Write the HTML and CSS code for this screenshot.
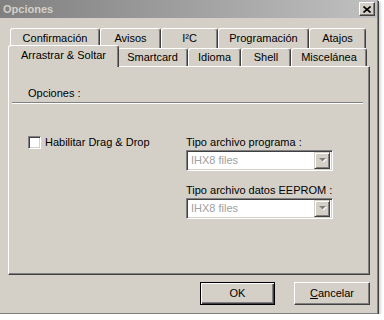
FILE: index.html
```html
<!DOCTYPE html>
<html>
<head>
<meta charset="utf-8">
<link rel="stylesheet" href="styles.css">
</head>
<body>
<div class="window">
  <div class="titlebar">
    <span class="title">Opciones</span>
    <div class="close">
      <svg width="8" height="7" viewBox="0 0 8 7"><path d="M0.5 0.5 L7.5 6.5 M7.5 0.5 L0.5 6.5" stroke="#000" stroke-width="1.6" fill="none"/></svg>
    </div>
  </div>
  <div class="main">
    <div class="tabs">
      <div class="tabrow back">
        <div class="tab w-confirm">Confirmación</div>
        <div class="tab w-avisos">Avisos</div>
        <div class="tab w-i2c">I²C</div>
        <div class="tab w-prog">Programación</div>
        <div class="tab w-atajos">Atajos</div>
      </div>
      <div class="tabrow front">
        <div class="tab selected w-arr">Arrastrar &amp; Soltar</div>
        <div class="tab w-smart">Smartcard</div>
        <div class="tab w-idioma">Idioma</div>
        <div class="tab w-shell">Shell</div>
        <div class="tab w-misc">Miscelánea</div>
      </div>
    </div>
    <div class="panel">
      <div class="grp-title">Opciones :</div>
      <div class="sep"></div>
      <div class="content">
        <div class="left">
          <label class="check"><span class="box"></span><span>Habilitar Drag &amp; Drop</span></label>
        </div>
        <div class="right">
          <div class="lbl">Tipo archivo programa :</div>
          <div class="combo"><span class="val">IHX8 files</span><span class="drop"><svg width="7" height="5" viewBox="0 0 7 5"><path d="M1 1 H8 L4.5 4.5 Z" fill="#fff"/><path d="M0 0 H7 L3.5 3.5 Z" fill="#808080"/></svg></span></div>
          <div class="lbl second">Tipo archivo datos EEPROM :</div>
          <div class="combo"><span class="val">IHX8 files</span><span class="drop"><svg width="7" height="5" viewBox="0 0 7 5"><path d="M1 1 H8 L4.5 4.5 Z" fill="#fff"/><path d="M0 0 H7 L3.5 3.5 Z" fill="#808080"/></svg></span></div>
        </div>
      </div>
    </div>
    <div class="buttons">
      <div class="btn default w-ok">OK</div>
      <div class="btn w-cancel"><span class="u">C</span>ancelar</div>
    </div>
  </div>
</div>
</body>
</html>
```
FILE: styles.css
```css
* { box-sizing: border-box; }
body {
  margin: 0;
  background: #fff;
  font: 11px "Liberation Sans", Arial, sans-serif;
  color: #000;
}
.window {
  width: 378px;
  height: 314px;
  background: #d4d0c8;
  border-right: 1px solid #808080;
  border-bottom: 1px solid #808080;
  box-shadow: 1px 1px 0 #404040, 2px 2px 3px rgba(0,0,0,0.25);
}
.titlebar {
  height: 18px;
  display: flex;
  align-items: center;
  justify-content: space-between;
  padding: 0 2px 0 3px;
  background: linear-gradient(to right, #808080, #c0c0c0);
}
.title {
  font-weight: bold;
  color: #d4d0c8;
  line-height: 13px;
}
.close {
  width: 16px;
  height: 14px;
  background: #d4d0c8;
  border: 1px solid;
  border-color: #fff #404040 #404040 #fff;
  box-shadow: inset -1px -1px #808080;
  display: flex;
  align-items: center;
  justify-content: center;
}
.close svg { display: block; margin-left: -1px; }
.main {
  padding: 10px 7px 0 8px;
}
.tabrow {
  display: flex;
  padding-left: 2px;
}
.tabrow.back { height: 20px; }
.tabrow.front { height: 18px; align-items: flex-end; }
.tab {
  height: 100%;
  border-top: 1px solid #fff;
  border-left: 1px solid #fff;
  border-right: 1px solid #404040;
  box-shadow: inset -1px 0 #808080;
  border-radius: 3px 3px 0 0;
  display: flex;
  align-items: center;
  justify-content: center;
  line-height: 13px;
  white-space: nowrap;
  background: #d4d0c8;
}
.tab.selected {
  height: 22px;
  margin: 0 -2px -1px -2px;
  padding-bottom: 3px;
  position: relative;
  z-index: 2;
}
.w-confirm { width: 90px; }
.w-avisos { width: 61px; }
.w-i2c { width: 57px; }
.w-prog { width: 91px; }
.w-atajos { width: 57px; }
.w-arr { width: 111px; }
.w-smart { width: 71px; }
.w-idioma { width: 53px; }
.w-shell { width: 50px; }
.w-misc { width: 76px; }

.panel {
  width: 362px;
  height: 209px;
  border: 1px solid;
  border-color: #fff #404040 #404040 #fff;
  box-shadow: inset -1px -1px #808080;
}
.grp-title {
  padding: 20px 0 0 19px;
  line-height: 13px;
}
.sep {
  margin: 2px 6px 0 3px;
  border-top: 1px solid #808080;
  border-bottom: 1px solid #fff;
}
.content {
  display: flex;
  margin-top: 32px;
}
.left {
  width: 177px;
  padding-left: 19px;
}
.check {
  display: flex;
  align-items: center;
  gap: 4px;
  line-height: 13px;
}
.box {
  width: 13px;
  height: 13px;
  background: #fff;
  border: 1px solid;
  border-color: #808080 #fff #fff #808080;
  box-shadow: inset 1px 1px #404040, inset -1px -1px #d4d0c8;
}
.right { width: 148px; }
.lbl { line-height: 13px; }
.lbl.second { margin-top: 13px; }
.combo {
  margin-top: 1px;
  width: 147px;
  height: 21px;
  background: #fff;
  border: 1px solid;
  border-color: #808080 #fff #fff #808080;
  box-shadow: inset 1px 1px #404040, inset -1px -1px #d4d0c8;
  display: flex;
  align-items: center;
  justify-content: space-between;
  padding: 2px;
}
.val {
  color: #a0a0a0;
  padding-left: 2px;
  line-height: 13px;
}
.drop {
  width: 16px;
  height: 17px;
  background: #d4d0c8;
  border: 1px solid;
  border-color: #d4d0c8 #404040 #404040 #d4d0c8;
  box-shadow: inset 1px 1px #fff, inset -1px -1px #808080;
  display: flex;
  align-items: center;
  justify-content: center;
}
.drop svg { display: block; overflow: visible; }
.buttons {
  display: flex;
  justify-content: flex-end;
  gap: 19px;
  margin-top: 7px;
}
.btn {
  height: 23px;
  display: flex;
  align-items: center;
  justify-content: center;
  background: #d4d0c8;
  border: 1px solid;
  border-color: #fff #404040 #404040 #fff;
  box-shadow: inset -1px -1px #808080;
  line-height: 13px;
}
.btn.default {
  border: 1px solid #000;
  box-shadow: inset 1px 1px #fff, inset -1px -1px #404040, inset -2px -2px #808080;
}
.w-ok { width: 75px; }
.w-cancel { width: 76px; }
.u { text-decoration: underline; }
```
